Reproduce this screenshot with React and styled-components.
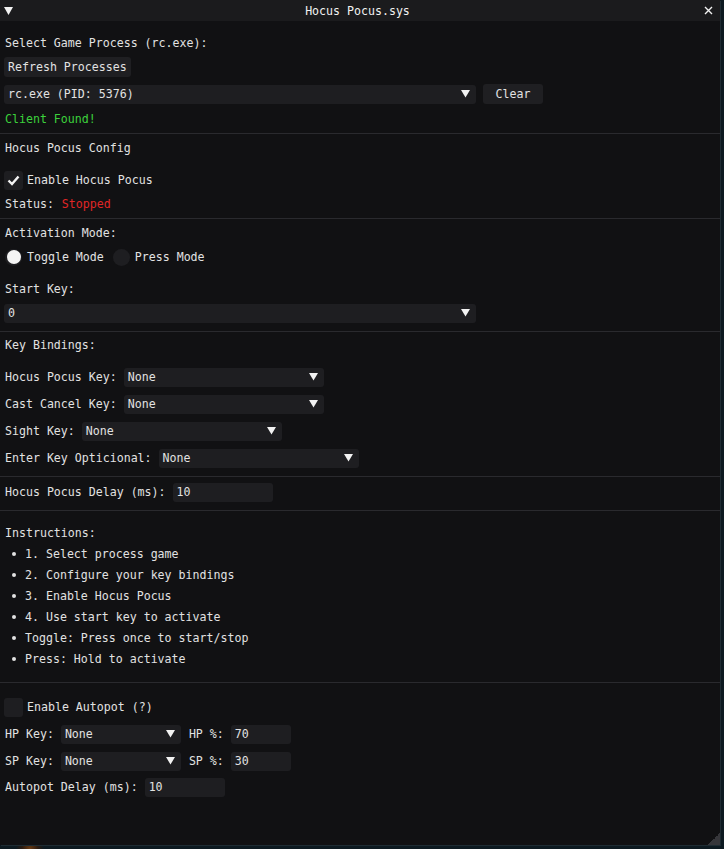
import React, { useState } from "react";
import styled, { createGlobalStyle } from "styled-components";

const GlobalStyle = createGlobalStyle`
  html, body {
    margin: 0;
    padding: 0;
    background: #0d1a21;
    overflow: hidden;
  }
  body {
    font-family: "DejaVu Sans Mono", "Liberation Mono", monospace;
    font-size: 11.6px;
    color: #e2e2e2;
  }
`;

const Desktop = styled.div`
  width: 724px;
  height: 849px;
  background: radial-gradient(circle at 30px 849px, #6b3a10 0, #2a1a10 8px, transparent 14px), #0d1a21;
`;

const Window = styled.div`
  position: relative;
  width: 720px;
  height: 845px;
  background: #111113;
  box-shadow: 1px 1px 0 #1f2c33;
  display: flex;
  flex-direction: column;
`;

const TitleBar = styled.div`
  height: 21px;
  background: #1b1b1d;
  display: flex;
  align-items: center;
  padding: 0 7px 0 4px;
  flex-shrink: 0;
`;

const TitleText = styled.div`
  flex: 1;
  text-align: center;
  color: #f2f2f2;
  padding-right: 2px;
`;

const Body = styled.div`
  padding: 0 4px;
  display: flex;
  flex-direction: column;
`;

const Row = styled.div`
  display: flex;
  align-items: center;
  height: ${(p) => p.$h || 20}px;
  margin-top: ${(p) => p.$mt || 0}px;
  gap: ${(p) => (p.$gap !== undefined ? p.$gap : 7)}px;
  white-space: pre;
`;

const Label = styled.span`
  color: ${(p) => p.$color || "#e2e2e2"};
  padding-left: ${(p) => p.$pl || 0}px;
  margin-left: ${(p) => p.$ml || 0}px;
`;

const Separator = styled.div`
  height: 1px;
  background: #2a2a2e;
  margin: ${(p) => p.$mt || 0}px -4px 0;
`;

const Frame = styled.div`
  height: 19px;
  width: ${(p) => p.$w}px;
  background: #1e1e21;
  border-radius: 3px;
  display: flex;
  align-items: center;
  padding: 0 6px 0 4px;
  box-sizing: border-box;
  flex-shrink: 0;
`;

const ComboValue = styled.span`
  flex: 1;
  color: #e2e2e2;
`;

const Button = styled.div`
  height: 20px;
  width: ${(p) => (p.$w ? `${p.$w}px` : "auto")};
  padding: 0 4px;
  background: #1f1f22;
  border-radius: 3px;
  display: flex;
  align-items: center;
  justify-content: ${(p) => (p.$w ? "center" : "flex-start")};
  box-sizing: border-box;
  color: #e2e2e2;
`;

const CheckBox = styled.div`
  width: 19px;
  height: 19px;
  background: #1e1e21;
  border-radius: 3px;
  display: flex;
  align-items: center;
  justify-content: center;
  margin-right: -3px;
`;

const RadioOuter = styled.div`
  width: 17px;
  height: 17px;
  border-radius: 50%;
  background: #1e1e21;
  display: flex;
  align-items: center;
  justify-content: center;
  margin: 0 -2px 0 ${(p) => p.$ml || 1}px;
`;

const RadioDot = styled.div`
  width: 14px;
  height: 14px;
  border-radius: 50%;
  background: #f4f4f4;
`;

const BulletRow = styled.div`
  display: flex;
  align-items: center;
  height: 20px;
  margin-top: 1px;
  white-space: pre;
`;

const Dot = styled.span`
  width: 4px;
  height: 4px;
  border-radius: 50%;
  background: #e2e2e2;
  margin: 0 9px 0 8px;
`;

const Grip = styled.div`
  position: absolute;
  right: 0;
  bottom: 0;
  width: 12px;
  height: 12px;
  background: linear-gradient(135deg, transparent 50%, #36363a 50%);
`;

const Arrow = () => (
  <svg width="9" height="8" viewBox="0 0 9 8">
    <polygon points="0,0 9,0 4.5,7.5" fill="#f2f2f2" />
  </svg>
);

const Combo = ({ w, value }) => (
  <Frame $w={w}>
    <ComboValue>{value}</ComboValue>
    <Arrow />
  </Frame>
);

const Input = ({ w, value }) => (
  <Frame $w={w}>
    <ComboValue>{value}</ComboValue>
  </Frame>
);

const instructions = [
  "1. Select process game",
  "2. Configure your key bindings",
  "3. Enable Hocus Pocus",
  "4. Use start key to activate",
  "Toggle: Press once to start/stop",
  "Press: Hold to activate",
];

const bindings = [
  { label: "Hocus Pocus Key:", mt: 12 },
  { label: "Cast Cancel Key:", mt: 7 },
  { label: "Sight Key:", mt: 7 },
  { label: "Enter Key Opticional:", mt: 7 },
];

const potions = [
  { key: "HP", pct: "70", mt: 7 },
  { key: "SP", pct: "30", mt: 7 },
];

export default function App() {
  const [enabled] = useState(true);

  return (
    <Desktop>
      <GlobalStyle />
      <Window>
        <TitleBar>
          <svg width="9" height="8" viewBox="0 0 9 8">
            <polygon points="0,0 9,0 4.5,8" fill="#f2f2f2" />
          </svg>
          <TitleText>Hocus Pocus.sys</TitleText>
          <svg width="9" height="9" viewBox="0 0 9 9">
            <path d="M1 1 L8 8 M8 1 L1 8" stroke="#f2f2f2" strokeWidth="1.4" />
          </svg>
        </TitleBar>
        <Body>
          <Row $mt={12}>
            <Label $pl={1}>Select Game Process (rc.exe):</Label>
          </Row>
          <Row $mt={4}>
            <Button>Refresh Processes</Button>
          </Row>
          <Row $mt={7}>
            <Combo w={472} value="rc.exe (PID: 5376)" />
            <Button $w={60}>Clear</Button>
          </Row>
          <Row $mt={5}>
            <Label $pl={1} $color="#3cd23c">Client Found!</Label>
          </Row>
          <Separator $mt={4} />

          <Row $mt={4}>
            <Label $pl={1}>Hocus Pocus Config</Label>
          </Row>
          <Row $mt={12}>
            <CheckBox>
              {enabled && (
                <svg width="13" height="11" viewBox="0 0 13 11">
                  <path d="M1.5 5.5 L5 9 L11.5 1.5" stroke="#f4f4f4" strokeWidth="2.4" fill="none" />
                </svg>
              )}
            </CheckBox>
            <Label>Enable Hocus Pocus</Label>
          </Row>
          <Row $mt={4} $gap={0}>
            <Label $pl={1}>Status: </Label>
            <Label $color="#e02626" $ml={1}>Stopped</Label>
          </Row>
          <Separator $mt={4} />

          <Row $mt={4}>
            <Label $pl={1}>Activation Mode:</Label>
          </Row>
          <Row $mt={4}>
            <RadioOuter>
              <RadioDot />
            </RadioOuter>
            <Label>Toggle Mode</Label>
            <RadioOuter $ml={2} />
            <Label>Press Mode</Label>
          </Row>
          <Row $mt={12}>
            <Label $pl={1}>Start Key:</Label>
          </Row>
          <Row $mt={4}>
            <Combo w={472} value="0" />
          </Row>
          <Separator $mt={8} />

          <Row $mt={3}>
            <Label $pl={1}>Key Bindings:</Label>
          </Row>
          {bindings.map((b) => (
            <Row key={b.label} $mt={b.mt}>
              <Label $pl={1}>{b.label}</Label>
              <Combo w={200} value="None" />
            </Row>
          ))}
          <Separator $mt={8} />

          <Row $mt={5}>
            <Label $pl={1}>Hocus Pocus Delay (ms):</Label>
            <Input w={100} value="10" />
          </Row>
          <Separator $mt={8} />

          <Row $mt={12}>
            <Label $pl={1}>Instructions:</Label>
          </Row>
          {instructions.map((t) => (
            <BulletRow key={t}>
              <Dot />
              <Label>{t}</Label>
            </BulletRow>
          ))}
          <Separator $mt={13} />

          <Row $mt={14}>
            <CheckBox />
            <Label>Enable Autopot (?)</Label>
          </Row>
          {potions.map((p) => (
            <Row key={p.key} $mt={p.mt}>
              <Label $pl={1}>{p.key} Key:</Label>
              <Combo w={120} value="None" />
              <Label $ml={1}>{p.key} %:</Label>
              <Input w={60} value={p.pct} />
            </Row>
          ))}
          <Row $mt={6}>
            <Label $pl={1}>Autopot Delay (ms):</Label>
            <Input w={80} value="10" />
          </Row>
        </Body>
        <Grip />
      </Window>
    </Desktop>
  );
}
